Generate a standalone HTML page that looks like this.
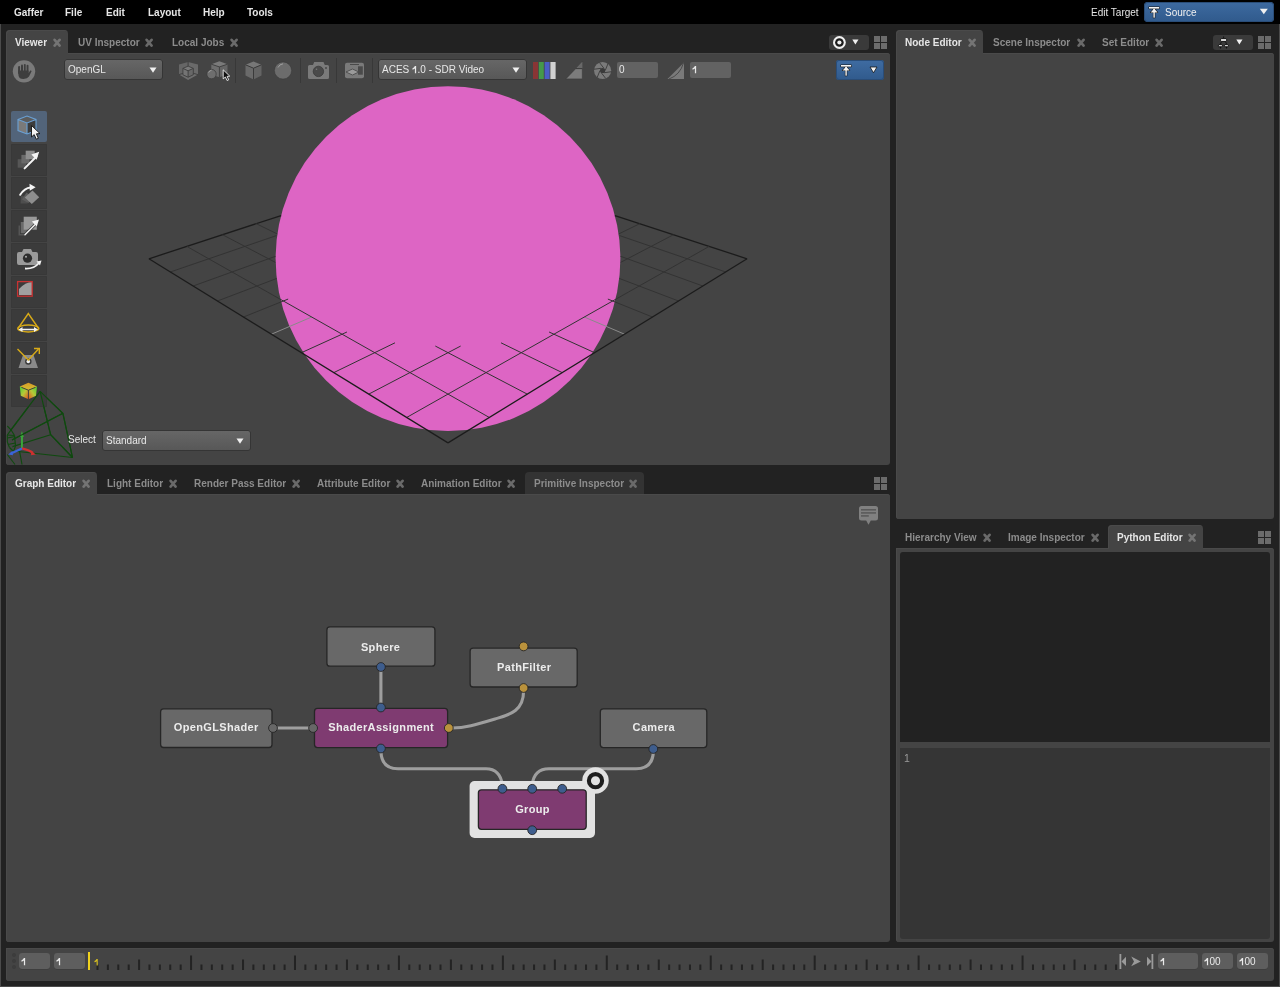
<!DOCTYPE html>
<html><head><meta charset="utf-8"><style>
html,body{margin:0;padding:0;width:1280px;height:987px;overflow:hidden;background:#222;}
body{position:relative;font-family:"Liberation Sans", sans-serif;}
.t{position:absolute;white-space:nowrap;will-change:transform;}
.r{position:absolute;display:block;}
</style></head><body>
<div class="r" style="left:0px;top:0px;width:1280px;height:987px;background:#222222;"></div>
<div class="r" style="left:0px;top:24px;width:1px;height:963px;background:#4b4b4b;"></div>
<div class="r" style="left:1279px;top:24px;width:1px;height:963px;background:#4b4b4b;"></div>
<div class="r" style="left:0px;top:986px;width:1280px;height:1px;background:#4b4b4b;"></div>
<div class="r" style="left:0px;top:0px;width:1280px;height:24px;background:#000000;"></div>
<div class="t" style="left:13.90px;top:7.54px;font-size:10px;line-height:10px;font-weight:bold;color:#e6e6e6;font-family:"Liberation Sans", sans-serif;">Gaffer</div>
<div class="t" style="left:65.40px;top:7.54px;font-size:10px;line-height:10px;font-weight:bold;color:#e6e6e6;font-family:"Liberation Sans", sans-serif;">File</div>
<div class="t" style="left:106.40px;top:7.54px;font-size:10px;line-height:10px;font-weight:bold;color:#e6e6e6;font-family:"Liberation Sans", sans-serif;">Edit</div>
<div class="t" style="left:148.40px;top:7.54px;font-size:10px;line-height:10px;font-weight:bold;color:#e6e6e6;font-family:"Liberation Sans", sans-serif;">Layout</div>
<div class="t" style="left:203.40px;top:7.54px;font-size:10px;line-height:10px;font-weight:bold;color:#e6e6e6;font-family:"Liberation Sans", sans-serif;">Help</div>
<div class="t" style="left:247.40px;top:7.54px;font-size:10px;line-height:10px;font-weight:bold;color:#e6e6e6;font-family:"Liberation Sans", sans-serif;">Tools</div>
<div class="t" style="left:1091.00px;top:7.54px;font-size:10px;line-height:10px;font-weight:normal;color:#e6e6e6;font-family:"Liberation Sans", sans-serif;">Edit Target</div>
<div class="r" style="left:1144px;top:2px;width:130px;height:20px;border-radius:4px;background:linear-gradient(#3d6aa0,#305a8c);box-shadow:inset 0 0 0 1px #2a4d78;"></div>
<svg class="r" style="left:1148.4px;top:5.6px;" width="13" height="13" viewBox="0 0 13 13"><g stroke="#151515" stroke-width="1.1" stroke-linejoin="round"><rect x="1" y="1" width="10.2" height="1.6"/><rect x="5.4" y="3" width="1.4" height="8.7"/><path d="M2.6 6.4 L6.1 2.6 L9.6 6.4 Z"/></g><g fill="#f4f4f4"><rect x="1" y="1" width="10.2" height="1.6"/><rect x="5.4" y="3" width="1.4" height="8.7"/><path d="M2.6 6.4 L6.1 2.6 L9.6 6.4 Z"/></g></svg>
<div class="t" style="left:1165.00px;top:7.54px;font-size:10px;line-height:10px;font-weight:normal;color:#f0f0f0;font-family:"Liberation Sans", sans-serif;">Source</div>
<svg class="r" style="left:1259px;top:8px;" width="10" height="7" viewBox="0 0 10 7"><path d="M0.8 0.8 H8.8 L4.8 6.2 Z" fill="#f0f0f0"/></svg>
<div class="r" style="left:6px;top:53px;width:884px;height:412px;background:#444444;border-radius:0px 3px 3px 3px;box-shadow:inset 0 1px 0 #4a4a4a, inset 1px 0 0 #4a4a4a;"></div>
<div class="r" style="left:896px;top:53px;width:378px;height:466px;background:#444444;border-radius:0px 3px 3px 3px;box-shadow:inset 0 1px 0 #4a4a4a, inset 1px 0 0 #4a4a4a;"></div>
<div class="r" style="left:6px;top:494px;width:884px;height:448px;background:#444444;border-radius:0px 3px 3px 3px;box-shadow:inset 0 1px 0 #4a4a4a, inset 1px 0 0 #4a4a4a;"></div>
<div class="r" style="left:896px;top:548px;width:378px;height:394px;background:#444444;border-radius:0px 3px 3px 3px;box-shadow:inset 0 1px 0 #4a4a4a, inset 1px 0 0 #4a4a4a;"></div>
<div class="r" style="left:6px;top:948px;width:1268px;height:33px;background:#444444;border-radius:0px 3px 3px 3px;box-shadow:inset 0 1px 0 #4a4a4a, inset 1px 0 0 #4a4a4a;"></div>
<div class="r" style="left:6px;top:30px;width:62px;height:24px;background:#444444;border-radius:4px 4px 0 0;box-shadow:inset 1px 1px 0 #4a4a4a;"></div>
<div class="t" style="left:15.00px;top:37.83px;font-size:10px;line-height:10px;font-weight:bold;color:#e6e6e6;font-family:"Liberation Sans", sans-serif;">Viewer</div>
<svg class="r" style="left:53px;top:37.7px;" width="9" height="10" viewBox="0 0 9 10"><path d="M1.6 1.8 L6.6 7.6 M6.6 1.8 L1.6 7.6" stroke="#747474" stroke-width="2.6" stroke-linecap="round"/></svg>
<div class="t" style="left:78.00px;top:37.83px;font-size:10px;line-height:10px;font-weight:bold;color:#8c8c8c;font-family:"Liberation Sans", sans-serif;">UV Inspector</div>
<svg class="r" style="left:144.5px;top:37.7px;" width="9" height="10" viewBox="0 0 9 10"><path d="M1.6 1.8 L6.6 7.6 M6.6 1.8 L1.6 7.6" stroke="#6a6a6a" stroke-width="2.6" stroke-linecap="round"/></svg>
<div class="t" style="left:171.50px;top:37.83px;font-size:10px;line-height:10px;font-weight:bold;color:#8c8c8c;font-family:"Liberation Sans", sans-serif;">Local Jobs</div>
<svg class="r" style="left:229.5px;top:37.7px;" width="9" height="10" viewBox="0 0 9 10"><path d="M1.6 1.8 L6.6 7.6 M6.6 1.8 L1.6 7.6" stroke="#6a6a6a" stroke-width="2.6" stroke-linecap="round"/></svg>
<div class="r" style="left:896px;top:30px;width:87px;height:24px;background:#444444;border-radius:4px 4px 0 0;box-shadow:inset 1px 1px 0 #4a4a4a;"></div>
<div class="t" style="left:905.00px;top:37.83px;font-size:10px;line-height:10px;font-weight:bold;color:#e6e6e6;font-family:"Liberation Sans", sans-serif;">Node Editor</div>
<svg class="r" style="left:967.5px;top:37.7px;" width="9" height="10" viewBox="0 0 9 10"><path d="M1.6 1.8 L6.6 7.6 M6.6 1.8 L1.6 7.6" stroke="#747474" stroke-width="2.6" stroke-linecap="round"/></svg>
<div class="t" style="left:993.30px;top:37.83px;font-size:10px;line-height:10px;font-weight:bold;color:#8c8c8c;font-family:"Liberation Sans", sans-serif;">Scene Inspector</div>
<svg class="r" style="left:1077px;top:37.7px;" width="9" height="10" viewBox="0 0 9 10"><path d="M1.6 1.8 L6.6 7.6 M6.6 1.8 L1.6 7.6" stroke="#6a6a6a" stroke-width="2.6" stroke-linecap="round"/></svg>
<div class="t" style="left:1101.80px;top:37.83px;font-size:10px;line-height:10px;font-weight:bold;color:#8c8c8c;font-family:"Liberation Sans", sans-serif;">Set Editor</div>
<svg class="r" style="left:1155px;top:37.7px;" width="9" height="10" viewBox="0 0 9 10"><path d="M1.6 1.8 L6.6 7.6 M6.6 1.8 L1.6 7.6" stroke="#6a6a6a" stroke-width="2.6" stroke-linecap="round"/></svg>
<div class="r" style="left:6px;top:471.5px;width:91px;height:23.5px;background:#444444;border-radius:4px 4px 0 0;box-shadow:inset 1px 1px 0 #4a4a4a;"></div>
<div class="r" style="left:524.5px;top:471.5px;width:119.5px;height:22.5px;background:#333333;border-radius:4px 4px 0 0;"></div>
<div class="t" style="left:15.00px;top:478.84px;font-size:10px;line-height:10px;font-weight:bold;color:#e6e6e6;font-family:"Liberation Sans", sans-serif;">Graph Editor</div>
<svg class="r" style="left:82px;top:478.7px;" width="9" height="10" viewBox="0 0 9 10"><path d="M1.6 1.8 L6.6 7.6 M6.6 1.8 L1.6 7.6" stroke="#747474" stroke-width="2.6" stroke-linecap="round"/></svg>
<div class="t" style="left:107.00px;top:478.84px;font-size:10px;line-height:10px;font-weight:bold;color:#8c8c8c;font-family:"Liberation Sans", sans-serif;">Light Editor</div>
<svg class="r" style="left:168.75px;top:478.7px;" width="9" height="10" viewBox="0 0 9 10"><path d="M1.6 1.8 L6.6 7.6 M6.6 1.8 L1.6 7.6" stroke="#6a6a6a" stroke-width="2.6" stroke-linecap="round"/></svg>
<div class="t" style="left:193.75px;top:478.84px;font-size:10px;line-height:10px;font-weight:bold;color:#8c8c8c;font-family:"Liberation Sans", sans-serif;">Render Pass Editor</div>
<svg class="r" style="left:291.75px;top:478.7px;" width="9" height="10" viewBox="0 0 9 10"><path d="M1.6 1.8 L6.6 7.6 M6.6 1.8 L1.6 7.6" stroke="#6a6a6a" stroke-width="2.6" stroke-linecap="round"/></svg>
<div class="t" style="left:317.00px;top:478.84px;font-size:10px;line-height:10px;font-weight:bold;color:#8c8c8c;font-family:"Liberation Sans", sans-serif;">Attribute Editor</div>
<svg class="r" style="left:395.5px;top:478.7px;" width="9" height="10" viewBox="0 0 9 10"><path d="M1.6 1.8 L6.6 7.6 M6.6 1.8 L1.6 7.6" stroke="#6a6a6a" stroke-width="2.6" stroke-linecap="round"/></svg>
<div class="t" style="left:421.00px;top:478.84px;font-size:10px;line-height:10px;font-weight:bold;color:#8c8c8c;font-family:"Liberation Sans", sans-serif;">Animation Editor</div>
<svg class="r" style="left:507px;top:478.7px;" width="9" height="10" viewBox="0 0 9 10"><path d="M1.6 1.8 L6.6 7.6 M6.6 1.8 L1.6 7.6" stroke="#6a6a6a" stroke-width="2.6" stroke-linecap="round"/></svg>
<div class="t" style="left:533.50px;top:478.84px;font-size:10px;line-height:10px;font-weight:bold;color:#8c8c8c;font-family:"Liberation Sans", sans-serif;">Primitive Inspector</div>
<svg class="r" style="left:629px;top:478.7px;" width="9" height="10" viewBox="0 0 9 10"><path d="M1.6 1.8 L6.6 7.6 M6.6 1.8 L1.6 7.6" stroke="#6a6a6a" stroke-width="2.6" stroke-linecap="round"/></svg>
<div class="r" style="left:1107.5px;top:525px;width:95.5px;height:24px;background:#444444;border-radius:4px 4px 0 0;box-shadow:inset 1px 1px 0 #4a4a4a;"></div>
<div class="t" style="left:905.40px;top:532.83px;font-size:10px;line-height:10px;font-weight:bold;color:#8c8c8c;font-family:"Liberation Sans", sans-serif;">Hierarchy View</div>
<svg class="r" style="left:983px;top:532.7px;" width="9" height="10" viewBox="0 0 9 10"><path d="M1.6 1.8 L6.6 7.6 M6.6 1.8 L1.6 7.6" stroke="#6a6a6a" stroke-width="2.6" stroke-linecap="round"/></svg>
<div class="t" style="left:1008.00px;top:532.83px;font-size:10px;line-height:10px;font-weight:bold;color:#8c8c8c;font-family:"Liberation Sans", sans-serif;">Image Inspector</div>
<svg class="r" style="left:1090.5px;top:532.7px;" width="9" height="10" viewBox="0 0 9 10"><path d="M1.6 1.8 L6.6 7.6 M6.6 1.8 L1.6 7.6" stroke="#6a6a6a" stroke-width="2.6" stroke-linecap="round"/></svg>
<div class="t" style="left:1116.60px;top:532.83px;font-size:10px;line-height:10px;font-weight:bold;color:#e6e6e6;font-family:"Liberation Sans", sans-serif;">Python Editor</div>
<svg class="r" style="left:1188px;top:532.7px;" width="9" height="10" viewBox="0 0 9 10"><path d="M1.6 1.8 L6.6 7.6 M6.6 1.8 L1.6 7.6" stroke="#747474" stroke-width="2.6" stroke-linecap="round"/></svg>
<svg class="r" style="left:874px;top:36px;" width="13" height="13" viewBox="0 0 13 13"><rect x="0" y="0" width="6" height="6" fill="#6b6b6b"/><rect x="7" y="0" width="6" height="6" fill="#6b6b6b"/><rect x="0" y="7" width="6" height="6" fill="#6b6b6b"/><rect x="7" y="7" width="6" height="6" fill="#6b6b6b"/></svg>
<svg class="r" style="left:1258px;top:36px;" width="13" height="13" viewBox="0 0 13 13"><rect x="0" y="0" width="6" height="6" fill="#6b6b6b"/><rect x="7" y="0" width="6" height="6" fill="#6b6b6b"/><rect x="0" y="7" width="6" height="6" fill="#6b6b6b"/><rect x="7" y="7" width="6" height="6" fill="#6b6b6b"/></svg>
<svg class="r" style="left:874px;top:477px;" width="13" height="13" viewBox="0 0 13 13"><rect x="0" y="0" width="6" height="6" fill="#6b6b6b"/><rect x="7" y="0" width="6" height="6" fill="#6b6b6b"/><rect x="0" y="7" width="6" height="6" fill="#6b6b6b"/><rect x="7" y="7" width="6" height="6" fill="#6b6b6b"/></svg>
<svg class="r" style="left:1258px;top:531px;" width="13" height="13" viewBox="0 0 13 13"><rect x="0" y="0" width="6" height="6" fill="#6b6b6b"/><rect x="7" y="0" width="6" height="6" fill="#6b6b6b"/><rect x="0" y="7" width="6" height="6" fill="#6b6b6b"/><rect x="7" y="7" width="6" height="6" fill="#6b6b6b"/></svg>
<svg class="r" style="left:6px;top:53px;border-radius:0 0 3px 3px;" width="884" height="412" viewBox="0 0 884 412"><circle cx="442" cy="205.60000000000002" r="172.4" fill="#dd65c4"/><line x1="275.10" y1="162.57" x2="142.92" y2="205.80" stroke="#1c1c1c" stroke-width="1.3"/><line x1="608.90" y1="162.57" x2="741.08" y2="205.80" stroke="#1c1c1c" stroke-width="1.3"/><line x1="270.41" y1="182.58" x2="164.33" y2="218.98" stroke="#333333" stroke-width="1.0"/><line x1="613.59" y1="182.58" x2="719.67" y2="218.98" stroke="#333333" stroke-width="1.0"/><line x1="269.59" y1="203.26" x2="187.14" y2="233.01" stroke="#333333" stroke-width="1.0"/><line x1="614.41" y1="203.26" x2="696.86" y2="233.01" stroke="#333333" stroke-width="1.0"/><line x1="270.51" y1="225.53" x2="211.49" y2="247.99" stroke="#333333" stroke-width="1.0"/><line x1="613.49" y1="225.53" x2="672.51" y2="247.99" stroke="#333333" stroke-width="1.0"/><line x1="282.14" y1="246.07" x2="237.53" y2="264.02" stroke="#333333" stroke-width="1.0"/><line x1="601.86" y1="246.07" x2="646.47" y2="264.02" stroke="#333333" stroke-width="1.0"/><line x1="305.69" y1="264.02" x2="265.45" y2="281.20" stroke="#8a8a8a" stroke-width="1.0"/><line x1="578.31" y1="264.02" x2="618.55" y2="281.20" stroke="#8a8a8a" stroke-width="1.0"/><line x1="340.94" y1="278.99" x2="295.47" y2="299.67" stroke="#333333" stroke-width="1.0"/><line x1="543.06" y1="278.99" x2="588.53" y2="299.67" stroke="#333333" stroke-width="1.0"/><line x1="633.76" y1="170.70" x2="612.85" y2="180.88" stroke="#333333" stroke-width="1.0"/><line x1="389.01" y1="289.81" x2="327.83" y2="319.58" stroke="#333333" stroke-width="1.0"/><line x1="250.24" y1="170.70" x2="271.15" y2="180.88" stroke="#333333" stroke-width="1.0"/><line x1="494.99" y1="289.81" x2="556.17" y2="319.58" stroke="#333333" stroke-width="1.0"/><line x1="667.47" y1="181.73" x2="614.68" y2="209.34" stroke="#333333" stroke-width="1.0"/><line x1="454.66" y1="293.05" x2="362.80" y2="341.10" stroke="#333333" stroke-width="1.0"/><line x1="216.53" y1="181.73" x2="269.32" y2="209.34" stroke="#333333" stroke-width="1.0"/><line x1="429.34" y1="293.05" x2="521.20" y2="341.10" stroke="#333333" stroke-width="1.0"/><line x1="703.18" y1="193.41" x2="400.73" y2="364.44" stroke="#333333" stroke-width="1.0"/><line x1="180.82" y1="193.41" x2="483.27" y2="364.44" stroke="#333333" stroke-width="1.0"/><line x1="741.08" y1="205.80" x2="442.00" y2="389.84" stroke="#1c1c1c" stroke-width="1.3"/><line x1="142.92" y1="205.80" x2="442.00" y2="389.84" stroke="#1c1c1c" stroke-width="1.3"/><line x1="34.1" y1="338.4" x2="56.9" y2="360.3" stroke="#0f4a0f" stroke-width="1.15"/><line x1="56.9" y1="360.3" x2="66.5" y2="404.5" stroke="#0f4a0f" stroke-width="1.15"/><line x1="34.1" y1="338.4" x2="44.6" y2="381.7" stroke="#0f4a0f" stroke-width="1.15"/><line x1="44.6" y1="381.7" x2="66.5" y2="404.5" stroke="#0f4a0f" stroke-width="1.15"/><line x1="5" y1="376.8" x2="34.1" y2="338.4" stroke="#0f4a0f" stroke-width="1.15"/><line x1="6" y1="387.1" x2="56.9" y2="360.3" stroke="#0f4a0f" stroke-width="1.15"/><line x1="6.5" y1="393.6" x2="44.6" y2="381.7" stroke="#0f4a0f" stroke-width="1.15"/><line x1="10" y1="398.3" x2="66.5" y2="404.5" stroke="#0f4a0f" stroke-width="1.15"/><line x1="1.2999999999999998" y1="373" x2="5" y2="376.8" stroke="#0f4a0f" stroke-width="1.15"/><line x1="5" y1="376.8" x2="1.2999999999999998" y2="382" stroke="#0f4a0f" stroke-width="1.15"/><line x1="1.2999999999999998" y1="382" x2="1.2999999999999998" y2="389" stroke="#0f4a0f" stroke-width="1.15"/><line x1="1.2999999999999998" y1="389" x2="3.5" y2="394.5" stroke="#0f4a0f" stroke-width="1.15"/><line x1="3.5" y1="394.5" x2="7.5" y2="398.5" stroke="#0f4a0f" stroke-width="1.15"/><line x1="5" y1="376.8" x2="8.5" y2="382.5" stroke="#0f4a0f" stroke-width="1.15"/><line x1="8.5" y1="382.5" x2="9.5" y2="393" stroke="#0f4a0f" stroke-width="1.15"/><line x1="9.5" y1="393" x2="7.5" y2="398.5" stroke="#0f4a0f" stroke-width="1.15"/><line x1="1.2999999999999998" y1="385" x2="9" y2="383.5" stroke="#0f4a0f" stroke-width="1.15"/><line x1="2" y1="391.5" x2="9.3" y2="390" stroke="#0f4a0f" stroke-width="1.15"/><line x1="1.2999999999999998" y1="382" x2="8.5" y2="382.5" stroke="#0f4a0f" stroke-width="1.15"/><line x1="1.2999999999999998" y1="401.5" x2="9" y2="411.5" stroke="#0f4a0f" stroke-width="1.15"/><line x1="13.5" y1="398" x2="16" y2="411.5" stroke="#0f4a0f" stroke-width="1.15"/><line x1="15.95" y1="395.4" x2="15.95" y2="382.4" stroke="#3aa53a" stroke-width="2"/><path d="M14.049999999999999 383.9 L15.95 378.0 L17.849999999999998 383.9 Z" fill="#3aa53a"/><path d="M15.95 395.4 Q22.95 396.9 26.95 399.9" fill="none" stroke="#d03030" stroke-width="2.2"/><path d="M24.95 397.59999999999997 L29.75 401.4 L25.15 402.2 Z" fill="#d03030"/><path d="M15.95 395.4 L4.949999999999999 400.4" fill="none" stroke="#3a64d8" stroke-width="2.2"/><path d="M6.449999999999999 398.0 L2.1499999999999986 401.4 L6.949999999999999 402.2 Z" fill="#3a64d8"/></svg>
<svg class="r" style="left:12px;top:59px;" width="24" height="25" viewBox="0 0 24 25"><circle cx="12" cy="12.35" r="11.2" fill="#7a7a7a"/><g fill="#3e3e3e"><rect x="6.1" y="7" width="2" height="8" rx="1"/><rect x="9" y="5.6" width="2" height="8" rx="1"/><rect x="11.9" y="4.9" width="1.8" height="8" rx="0.9"/><rect x="14.6" y="5.7" width="1.9" height="8" rx="0.95"/><path d="M6.1 11.5 H16.5 V14 L18.3 11.6 Q19.3 11 19.6 12.2 L17 17.6 Q15.5 20 11.5 20 Q7 20 6.5 16.5 Z"/></g></svg>
<div class="r" style="left:64.3px;top:59.4px;width:98.4px;height:20.2px;border-radius:3px;background:linear-gradient(#676767,#575757);box-shadow:inset 0 0 0 1px #353535;"></div>
<div class="t" style="left:68.00px;top:65.13px;font-size:10px;line-height:10px;font-weight:normal;color:#e8e8e8;font-family:"Liberation Sans", sans-serif;">OpenGL</div>
<svg class="r" style="left:148.5px;top:67px;" width="8" height="6" viewBox="0 0 8 6"><path d="M0.5 0.5 H7.5 L4 5.8 Z" fill="#f0f0f0"/></svg>
<svg class="r" style="left:178px;top:61px;" width="21" height="21" viewBox="0 0 21 21"><path d="M1 3.6 L10.1 0.9 V11 L1 13.6 Z" fill="#666"/><path d="M10.1 0.9 L20 3.6 V13.6 L10.1 11 Z" fill="#6a6a6a"/><path d="M1 13.6 L10.1 11 L20 13.6 L10.1 18.9 Z" fill="#6e6e6e"/><path d="M10.1 0.9 V11 M1 13.6 L10.1 11 L20 13.6" fill="none" stroke="#3e3e3e" stroke-width="0.9"/><path d="M4.9 7.4 L10.1 5.1 L15.3 7.4 L10.1 9.8 Z" fill="#7a7a7a"/><path d="M4.9 7.4 L10.1 9.8 V16.2 L4.9 13.8 Z" fill="#747474"/><path d="M15.3 7.4 L10.1 9.8 V16.2 L15.3 13.8 Z" fill="#686868"/><path d="M4.9 7.4 L10.1 5.1 L15.3 7.4 V13.8 L10.1 16.2 L4.9 13.8 Z M4.9 7.4 L10.1 9.8 L15.3 7.4 M10.1 9.8 V16.2" fill="none" stroke="#3e3e3e" stroke-width="0.9" stroke-linejoin="round"/></svg>
<svg class="r" style="left:205px;top:60px;" width="26" height="22" viewBox="0 0 26 22"><path d="M6.3 4.2 L14.4 1.3 L22.5 4.2 L14.4 6.9 Z" fill="#7a7a7a"/><path d="M6.3 4.2 L14.4 6.9 V17.2 L6.3 14.5 Z" fill="#6e6e6e"/><path d="M22.5 4.2 L14.4 6.9 V17.2 L22.5 14.5 Z" fill="#666"/><path d="M6.3 4.2 L14.4 6.9 L22.5 4.2 M14.4 6.9 V17.2" fill="none" stroke="#3e3e3e" stroke-width="0.9"/><circle cx="6.5" cy="14.1" r="4.7" fill="#6e6e6e" stroke="#3e3e3e" stroke-width="0.8"/><path d="M3.6 12.6 Q4.5 10.6 6.6 10.2" fill="none" stroke="#a8a8a8" stroke-width="0.8"/></svg>
<svg class="r" style="left:221.5px;top:68.5px;" width="9" height="13" viewBox="0 0 9 13"><path d="M1.2 0.8 L1.2 9.9 L3.4 8 L5 11.5 L6.7 10.8 L5.1 7.4 L7.8 7.2 Z" fill="#111" stroke="#eee" stroke-width="0.9" stroke-linejoin="round"/></svg>
<div class="r" style="left:235px;top:58px;width:1px;height:25px;background:#383838;"></div>
<svg class="r" style="left:244px;top:60px;" width="19" height="21" viewBox="0 0 19 21"><path d="M9.5 1.5 L17.5 4.8 L9.5 8.2 L1.5 4.8 Z" fill="#777"/><path d="M1.5 4.8 L9.5 8.2 V19.5 L1.5 15.5 Z" fill="#6a6a6a"/><path d="M17.5 4.8 L9.5 8.2 V19.5 L17.5 15.5 Z" fill="#646464"/><path d="M1.5 4.8 L9.5 8.2 L17.5 4.8 M9.5 8.2 V19.5" fill="none" stroke="#3a3a3a" stroke-width="1"/></svg>
<svg class="r" style="left:273px;top:60px;" width="20" height="21" viewBox="0 0 20 21"><circle cx="10" cy="10.5" r="8.6" fill="#6c6c6c" stroke="#3c3c3c" stroke-width="0.6"/><path d="M5 7.5 Q6.5 4.2 10 3.8" fill="none" stroke="#a0a0a0" stroke-width="1"/></svg>
<div class="r" style="left:300px;top:58px;width:1px;height:25px;background:#383838;"></div>
<svg class="r" style="left:307px;top:61px;" width="23" height="19" viewBox="0 0 23 19"><path d="M2.5 4 H6 L7.2 1 H16.5 L17.8 4 H20.5 Q22 4 22 5.5 V16.5 Q22 18 20.5 18 H2.5 Q1 18 1 16.5 V5.5 Q1 4 2.5 4 Z" fill="#7a7a7a"/><circle cx="11.4" cy="10.4" r="5.2" fill="#4a4a4a" stroke="#3a3a3a" stroke-width="0.8"/><circle cx="19" cy="7" r="1" fill="#4a4a4a"/><circle cx="9.5" cy="8.2" r="0.8" fill="#7a7a7a"/></svg>
<div class="r" style="left:336px;top:58px;width:1px;height:25px;background:#383838;"></div>
<svg class="r" style="left:344px;top:61px;" width="22" height="19" viewBox="0 0 22 19"><rect x="1" y="1.8" width="19" height="15.4" rx="2" fill="#7a7a7a"/><rect x="6" y="3" width="9" height="1" fill="#4a4a4a"/><path d="M2 11 L8.5 8 L14.8 11 L8.5 14 Z" fill="#9a9a9a" stroke="#454545" stroke-width="0.8"/><rect x="14" y="5.3" width="4.8" height="8.4" fill="#4a4a4a"/></svg>
<div class="r" style="left:372px;top:58px;width:1px;height:25px;background:#383838;"></div>
<div class="r" style="left:378.3px;top:59.4px;width:148.4px;height:20.2px;border-radius:3px;background:linear-gradient(#676767,#575757);box-shadow:inset 0 0 0 1px #353535;"></div>
<div class="t" style="left:382.00px;top:65.13px;font-size:10px;line-height:10px;font-weight:normal;color:#e8e8e8;font-family:"Liberation Sans", sans-serif;">ACES <svg width="5.56" height="7.16" viewBox="0 0 5.56 7.16" style="vertical-align:0;display:inline-block;overflow:visible"><path d="M2.90 0 H4.15 V7.16 H2.90 V2.60 Q1.70 3.50 0.50 3.70 V2.30 Q2.00 1.70 2.90 0 Z" fill="#e8e8e8"/></svg>.0 - SDR Video</div>
<svg class="r" style="left:511.5px;top:67px;" width="8" height="6" viewBox="0 0 8 6"><path d="M0.5 0.5 H7.5 L4 5.8 Z" fill="#f0f0f0"/></svg>
<svg class="r" style="left:532px;top:61px;" width="25" height="19" viewBox="0 0 25 19"><rect x="1" y="1" width="5" height="17" fill="#8a3535"/><rect x="6.8" y="1" width="5" height="17" fill="#45994a"/><rect x="12.6" y="1" width="5" height="17" fill="#4a5ec4"/><rect x="18.4" y="1" width="5.2" height="17" fill="#d2d2d2"/></svg>
<svg class="r" style="left:565px;top:60px;" width="19" height="20" viewBox="0 0 19 20"><path d="M0.8 18.9 L17.3 1.8 V18.9 Z" fill="#7c7c7c" stroke="#3a3a3a" stroke-width="0.6" stroke-linejoin="round"/><path d="M11.3 8.2 L17.3 1.8 V8.2 Z" fill="#686868"/><path d="M10.8 8.6 H17.3" stroke="#3a3a3a" stroke-width="1"/></svg>
<svg class="r" style="left:593px;top:61px;" width="20" height="20" viewBox="0 0 20 20"><circle cx="9.6" cy="9.5" r="8.6" fill="#7a7a7a"/><circle cx="9.6" cy="9.5" r="2.6" fill="#3a3a3a"/><line x1="12.20" y1="9.50" x2="14.95" y2="2.76" stroke="#3a3a3a" stroke-width="0.9"/><line x1="10.90" y1="11.75" x2="18.11" y2="10.76" stroke="#3a3a3a" stroke-width="0.9"/><line x1="8.30" y1="11.75" x2="12.76" y2="17.50" stroke="#3a3a3a" stroke-width="0.9"/><line x1="7.00" y1="9.50" x2="4.25" y2="16.24" stroke="#3a3a3a" stroke-width="0.9"/><line x1="8.30" y1="7.25" x2="1.09" y2="8.24" stroke="#3a3a3a" stroke-width="0.9"/><line x1="10.90" y1="7.25" x2="6.44" y2="1.50" stroke="#3a3a3a" stroke-width="0.9"/></svg>
<div class="r" style="left:617px;top:62px;width:41px;height:16px;border-radius:3px;background:#626262;border-radius:2px;"></div>
<div class="t" style="left:619.20px;top:64.73px;font-size:10px;line-height:10px;font-weight:normal;color:#e8e8e8;font-family:"Liberation Sans", sans-serif;">0</div>
<svg class="r" style="left:666px;top:61px;" width="20" height="19" viewBox="0 0 20 19"><path d="M1.5 18 L18 1.5 V18 Z" fill="#7a7a7a"/><path d="M3 18 Q14 14 17.5 2" fill="none" stroke="#454545" stroke-width="0.9"/></svg>
<div class="r" style="left:690px;top:62px;width:41px;height:16px;border-radius:3px;background:#626262;border-radius:2px;"></div>
<div class="t" style="left:692.20px;top:64.73px;font-size:10px;line-height:10px;font-weight:normal;color:#e8e8e8;font-family:"Liberation Sans", sans-serif;"><svg width="5.56" height="7.16" viewBox="0 0 5.56 7.16" style="vertical-align:0;display:inline-block;overflow:visible"><path d="M2.90 0 H4.15 V7.16 H2.90 V2.60 Q1.70 3.50 0.50 3.70 V2.30 Q2.00 1.70 2.90 0 Z" fill="#e8e8e8"/></svg></div>
<div class="r" style="left:836px;top:60px;width:47.5px;height:19.5px;border-radius:3px;background:linear-gradient(#3f6ca2,#305a8c);box-shadow:inset 0 0 0 1px #2a4d78;"></div>
<svg class="r" style="left:840.3px;top:63.7px;" width="13" height="13" viewBox="0 0 13 13"><g stroke="#151515" stroke-width="1.1" stroke-linejoin="round"><rect x="1" y="1" width="10.2" height="1.6"/><rect x="5.4" y="3" width="1.4" height="8.7"/><path d="M2.6 6.4 L6.1 2.6 L9.6 6.4 Z"/></g><g fill="#f4f4f4"><rect x="1" y="1" width="10.2" height="1.6"/><rect x="5.4" y="3" width="1.4" height="8.7"/><path d="M2.6 6.4 L6.1 2.6 L9.6 6.4 Z"/></g></svg>
<svg class="r" style="left:868.5px;top:65.8px;" width="9" height="8" viewBox="0 0 9 8"><path d="M1 1 H8 L4.5 6.8 Z" fill="#f4f4f4" stroke="#151515" stroke-width="0.8" stroke-linejoin="round"/></svg>
<div class="r" style="left:829px;top:35px;width:40px;height:15px;border-radius:3px;background:#3a3a3a;"></div>
<svg class="r" style="left:832px;top:35px;" width="15" height="15" viewBox="0 0 15 15"><circle cx="7.4" cy="7.5" r="6.4" fill="#f0f0f0"/><circle cx="7.4" cy="7.5" r="4.3" fill="#1a1a1a"/><circle cx="7.4" cy="7.5" r="2.1" fill="#f0f0f0"/></svg>
<svg class="r" style="left:851.5px;top:38.5px;" width="7" height="6" viewBox="0 0 7 6"><path d="M0.3 0.5 H6.5 L3.4 5.4 Z" fill="#f0f0f0"/></svg>
<div class="r" style="left:1213px;top:35px;width:40px;height:15px;border-radius:3px;background:#3a3a3a;"></div>
<svg class="r" style="left:1216px;top:35px;" width="15" height="15" viewBox="0 0 15 15"><path d="M7.6 1.5 V3.5 M5.5 6.5 L4.5 9 M9.5 6.5 L10.5 9 M4.5 12 V13.5 M10.5 12 V13.5" stroke="#111" stroke-width="1"/><rect x="4.6" y="3.6" width="6" height="2.8" rx="0.6" fill="#f0f0f0" stroke="#111" stroke-width="1"/><rect x="2.4" y="9.6" width="4" height="2.2" rx="0.5" fill="#e0e0e0" stroke="#111" stroke-width="1"/><rect x="8.4" y="9.6" width="4" height="2.2" rx="0.5" fill="#e0e0e0" stroke="#111" stroke-width="1"/></svg>
<svg class="r" style="left:1235.5px;top:38.5px;" width="7" height="6" viewBox="0 0 7 6"><path d="M0.3 0.5 H6.5 L3.4 5.4 Z" fill="#f0f0f0"/></svg>
<div class="r" style="left:11.3px;top:111.3px;width:35.4px;height:31.2px;border-radius:2px;background:#52647a;"></div>
<div class="r" style="left:11.3px;top:144.3px;width:35.4px;height:31.8px;border-radius:1px;background:#3b3b3b;box-shadow:inset 0 0 0 1px #383838;"></div>
<div class="r" style="left:11.3px;top:177.3px;width:35.4px;height:31.8px;border-radius:1px;background:#3b3b3b;box-shadow:inset 0 0 0 1px #383838;"></div>
<div class="r" style="left:11.3px;top:210.3px;width:35.4px;height:31.8px;border-radius:1px;background:#3b3b3b;box-shadow:inset 0 0 0 1px #383838;"></div>
<div class="r" style="left:11.3px;top:243.2px;width:35.4px;height:31.8px;border-radius:1px;background:#3b3b3b;box-shadow:inset 0 0 0 1px #383838;"></div>
<div class="r" style="left:11.3px;top:276.2px;width:35.4px;height:31.8px;border-radius:1px;background:#3b3b3b;box-shadow:inset 0 0 0 1px #383838;"></div>
<div class="r" style="left:11.3px;top:309.2px;width:35.4px;height:31.8px;border-radius:1px;background:#3b3b3b;box-shadow:inset 0 0 0 1px #383838;"></div>
<div class="r" style="left:11.3px;top:342.2px;width:35.4px;height:31.8px;border-radius:1px;background:#3b3b3b;box-shadow:inset 0 0 0 1px #383838;"></div>
<div class="r" style="left:11.3px;top:375.2px;width:35.4px;height:31.8px;border-radius:1px;background:#3b3b3b;box-shadow:inset 0 0 0 1px #383838;"></div>
<svg class="r" style="left:12px;top:112px;" width="35" height="31" viewBox="0 0 35 31"><path d="M6 7.5 L15 4 L24 7.5 L15 11 Z" fill="#5c5c5c"/><path d="M6 7.5 L15 11 V22 L6 18.5 Z" fill="#7a7a7a"/><path d="M24 7.5 L15 11 V22 L24 18.5 Z" fill="#3c3c3c"/><path d="M6 7.5 L15 4 L24 7.5 V18.5 L15 22 L6 18.5 Z M6 7.5 L15 11 L24 7.5 M15 11 V22" fill="none" stroke="#6aa0d4" stroke-width="1.1"/><path d="M19.5 13.5 L19.5 25 L22.2 22.6 L24.3 27.2 L26.4 26.3 L24.4 21.8 L28 21.6 Z" fill="#f4f4f4" stroke="#111" stroke-width="0.9"/></svg>
<svg class="r" style="left:11.3px;top:144.3px;" width="35" height="32" viewBox="0 0 35 32"><rect x="6.7" y="15.2" width="8.3" height="8.5" fill="#565656"/><rect x="10.4" y="10.9" width="8.1" height="8.5" fill="#6a6a6a"/><rect x="14.7" y="6.7" width="9" height="8.5" fill="#8e8e8e"/><path d="M13.6 24.4 L25.5 12.5" stroke="#f4f4f4" stroke-width="2" stroke-linecap="round"/><path d="M20.3 10.5 L28.2 7.8 L25.6 15.8 Z" fill="#f4f4f4"/></svg>
<svg class="r" style="left:11.3px;top:177.3px;" width="35" height="32" viewBox="0 0 35 32"><path d="M9.5 26.5 L10 18.5 L17.5 20 L16.5 26.5 Z" fill="#4e4e4e"/><path d="M11 22.5 L15.5 15.5 L22 20.5 L17.5 26 Z" fill="#5e5e5e"/><path d="M13.8 20.5 L21.5 13.5 L28.2 20.2 L20.8 27 Z" fill="#8e8e8e"/><path d="M9.2 17.8 Q13.5 11 19.6 10.5" fill="none" stroke="#f4f4f4" stroke-width="2" stroke-linecap="round"/><path d="M18.5 6.8 L24.6 10.2 L18.8 13.8 Z" fill="#f4f4f4"/></svg>
<svg class="r" style="left:11.3px;top:210.3px;" width="35" height="32" viewBox="0 0 35 32"><path d="M7.5 25.5 V15.5 H9 V24 H14 V25.5 Z" fill="#555"/><rect x="9.8" y="12" width="6" height="11.2" fill="#6a6a6a"/><rect x="12.7" y="6.7" width="13.1" height="13" fill="#999"/><path d="M14 24.8 L25 13.8" stroke="#3b3b3b" stroke-width="3"/><path d="M14 24.8 L25.2 13.6" stroke="#f4f4f4" stroke-width="1.4" stroke-linecap="round"/><path d="M20.8 11.6 L28 9.4 L25.8 16.6 Z" fill="#f4f4f4"/></svg>
<svg class="r" style="left:12px;top:242px;" width="35" height="32" viewBox="0 0 35 32"><path d="M7 10 H10 L11.5 7 H19 L20.5 10 H24 Q26 10 26 12 V21 Q26 23 24 23 H7 Q5 23 5 21 V12 Q5 10 7 10 Z" fill="#9a9a9a"/><circle cx="15.5" cy="16.2" r="4.6" fill="#2c2c2c"/><circle cx="14" cy="14.8" r="1" fill="#aaa"/><path d="M13 26.5 Q22 27 27 21" fill="none" stroke="#f2f2f2" stroke-width="1.8"/><path d="M24.5 19.5 L29.5 18.5 L28 23.5 Z" fill="#f2f2f2"/></svg>
<svg class="r" style="left:12px;top:276px;" width="35" height="32" viewBox="0 0 35 32"><path d="M7 19 V13 Q13.5 6 20 6 V19 Z" fill="#a0a0a0"/><rect x="5.6" y="5.6" width="14.6" height="14.6" fill="none" stroke="#c83232" stroke-width="1.3"/></svg>
<svg class="r" style="left:12px;top:309.3px;" width="35" height="32" viewBox="0 0 35 32"><path d="M6 19.5 L16.3 4.5 L26.6 19.5" fill="none" stroke="#d8aa18" stroke-width="1.4"/><ellipse cx="16.3" cy="19.5" rx="10.5" ry="3.4" fill="none" stroke="#d8aa18" stroke-width="1.5"/><path d="M9 20.5 H23.5" stroke="#f2f2f2" stroke-width="1.5"/><path d="M10.5 18 L6.5 20.5 L10.5 23 Z M22 18 L26 20.5 L22 23 Z" fill="#f2f2f2"/></svg>
<svg class="r" style="left:12px;top:342.2px;" width="35" height="32" viewBox="0 0 35 32"><path d="M6.5 26 L11 13 H21.5 L26 26 Z" fill="#8a8a8a"/><circle cx="16.3" cy="19.5" r="3.2" fill="#3a3a3a"/><circle cx="16.3" cy="19.5" r="1.8" fill="#f0f0f0"/><path d="M5.5 7 L16.3 18 L26.5 7" fill="none" stroke="#d8aa18" stroke-width="1.4"/><path d="M22 6.5 H27.3 V12" fill="none" stroke="#d8aa18" stroke-width="1.4"/></svg>
<svg class="r" style="left:12px;top:375px;" width="35" height="32" viewBox="0 0 35 32"><defs><linearGradient id="cg" x1="0" y1="0" x2="0" y2="1"><stop offset="0" stop-color="#d89a28"/><stop offset="1" stop-color="#d2c030"/></linearGradient><linearGradient id="cl" x1="0" y1="0" x2="1" y2="1"><stop offset="0" stop-color="#48d038"/><stop offset="0.5" stop-color="#b8c838"/><stop offset="1" stop-color="#e84a20"/></linearGradient><linearGradient id="cr" x1="1" y1="0" x2="0" y2="1"><stop offset="0" stop-color="#48d038"/><stop offset="0.5" stop-color="#b8c838"/><stop offset="1" stop-color="#e84a20"/></linearGradient></defs><path d="M16.4 7.7 L25 11.6 L16.4 15.2 L7.8 11.6 Z" fill="url(#cg)"/><path d="M7.8 11.6 L16.4 15.2 V24.3 L8.8 20.8 Z" fill="url(#cl)"/><path d="M25 11.6 L16.4 15.2 V24.3 L24 20.8 Z" fill="url(#cr)"/><path d="M9.5 12.4 L16.4 15.2 L23.4 12.4 M16.4 15.2 V24.3" fill="none" stroke="#3a3a3a" stroke-width="0.9"/></svg>
<svg class="r" style="left:6px;top:53px;" width="884" height="412" viewBox="0 0 884 412"><line x1="34.1" y1="338.4" x2="56.9" y2="360.3" stroke="#0f4a0f" stroke-width="1.15"/><line x1="56.9" y1="360.3" x2="66.5" y2="404.5" stroke="#0f4a0f" stroke-width="1.15"/><line x1="34.1" y1="338.4" x2="44.6" y2="381.7" stroke="#0f4a0f" stroke-width="1.15"/><line x1="44.6" y1="381.7" x2="66.5" y2="404.5" stroke="#0f4a0f" stroke-width="1.15"/><line x1="5" y1="376.8" x2="34.1" y2="338.4" stroke="#0f4a0f" stroke-width="1.15"/><line x1="6" y1="387.1" x2="56.9" y2="360.3" stroke="#0f4a0f" stroke-width="1.15"/></svg>
<div class="t" style="left:68.00px;top:434.54px;font-size:10px;line-height:10px;font-weight:normal;color:#e8e8e8;font-family:"Liberation Sans", sans-serif;">Select</div>
<div class="r" style="left:102.3px;top:430.4px;width:148.4px;height:20.2px;border-radius:3px;background:linear-gradient(#676767,#575757);box-shadow:inset 0 0 0 1px #353535;"></div>
<div class="t" style="left:106.00px;top:436.04px;font-size:10px;line-height:10px;font-weight:normal;color:#e8e8e8;font-family:"Liberation Sans", sans-serif;">Standard</div>
<svg class="r" style="left:235.5px;top:438px;" width="8" height="6" viewBox="0 0 8 6"><path d="M0.5 0.5 H7.5 L4 5.8 Z" fill="#f0f0f0"/></svg>
<svg class="r" style="left:6px;top:494px;" width="884" height="448" viewBox="0 0 884 448"><path d="M374.9 176 V210" fill="none" stroke="#9e9e9e" stroke-width="3.1" stroke-linecap="round"/><path d="M270 234 H304" fill="none" stroke="#9e9e9e" stroke-width="3.1" stroke-linecap="round"/><path d="M517.6 197 C517.6 218 502 221 489 225 C469 231 459 234 446 234" fill="none" stroke="#9e9e9e" stroke-width="3.1" stroke-linecap="round"/><path d="M374.9 258 Q376 274.79999999999995 392 274.79999999999995 H480 Q494 274.79999999999995 496.4 291" fill="none" stroke="#9e9e9e" stroke-width="3.1" stroke-linecap="round"/><path d="M647.3 259 Q646 274.79999999999995 630 274.79999999999995 H543 Q528 274.79999999999995 526.2 291" fill="none" stroke="#9e9e9e" stroke-width="3.1" stroke-linecap="round"/><rect x="320.90" y="132.90" width="108.00" height="39.30" rx="3" ry="3" fill="#686868" stroke="#262626" stroke-width="1.3"/><rect x="464.10" y="154.10" width="107.10" height="38.90" rx="3" ry="3" fill="#686868" stroke="#262626" stroke-width="1.3"/><rect x="154.60" y="214.80" width="111.40" height="38.70" rx="3" ry="3" fill="#686868" stroke="#262626" stroke-width="1.3"/><rect x="308.50" y="214.40" width="133.10" height="39.20" rx="3" ry="3" fill="#7f3b71" stroke="#262626" stroke-width="1.3"/><rect x="594.30" y="214.90" width="106.50" height="38.70" rx="3" ry="3" fill="#686868" stroke="#262626" stroke-width="1.3"/><rect x="463.6" y="287" width="125.4" height="57" rx="5" ry="5" fill="#e2e2e2"/><rect x="472.40" y="295.80" width="107.80" height="39.50" rx="3" ry="3" fill="#7f3b71" stroke="#262626" stroke-width="1.3"/><circle cx="589.5" cy="286.5" r="13.2" fill="#e2e2e2"/><circle cx="589.5" cy="286.70000000000005" r="6.6" fill="none" stroke="#1e1e1e" stroke-width="4.1"/><circle cx="374.90" cy="173.00" r="4.4" fill="#3e5d8d" stroke="#262626" stroke-width="0.9"/><circle cx="374.90" cy="213.50" r="4.4" fill="#3e5d8d" stroke="#262626" stroke-width="0.9"/><circle cx="374.90" cy="254.50" r="4.4" fill="#3e5d8d" stroke="#262626" stroke-width="0.9"/><circle cx="307.10" cy="234.00" r="4.4" fill="#676767" stroke="#262626" stroke-width="0.9"/><circle cx="267.00" cy="234.00" r="4.4" fill="#676767" stroke="#262626" stroke-width="0.9"/><circle cx="442.80" cy="234.00" r="4.4" fill="#ba923c" stroke="#262626" stroke-width="0.9"/><circle cx="517.60" cy="152.40" r="4.4" fill="#ba923c" stroke="#262626" stroke-width="0.9"/><circle cx="517.60" cy="194.00" r="4.4" fill="#ba923c" stroke="#262626" stroke-width="0.9"/><circle cx="647.30" cy="255.00" r="4.4" fill="#3e5d8d" stroke="#262626" stroke-width="0.9"/><circle cx="496.40" cy="294.80" r="4.4" fill="#3e5d8d" stroke="#262626" stroke-width="0.9"/><circle cx="526.20" cy="294.80" r="4.4" fill="#3e5d8d" stroke="#262626" stroke-width="0.9"/><circle cx="556.20" cy="294.80" r="4.4" fill="#3e5d8d" stroke="#262626" stroke-width="0.9"/><circle cx="526.20" cy="336.20" r="4.4" fill="#3e5d8d" stroke="#262626" stroke-width="0.9"/></svg>
<div class="t" style="left:326.3px;top:641.59px;width:109.19999999999999px;text-align:center;font-size:11px;line-height:11px;font-weight:bold;color:#ececec;letter-spacing:0.35px;">Sphere</div>
<div class="t" style="left:469.5px;top:661.89px;width:108.29999999999995px;text-align:center;font-size:11px;line-height:11px;font-weight:bold;color:#ececec;letter-spacing:0.35px;">PathFilter</div>
<div class="t" style="left:160px;top:722.49px;width:112.60000000000002px;text-align:center;font-size:11px;line-height:11px;font-weight:bold;color:#ececec;letter-spacing:0.35px;">OpenGLShader</div>
<div class="t" style="left:313.9px;top:722.49px;width:134.3px;text-align:center;font-size:11px;line-height:11px;font-weight:bold;color:#ececec;letter-spacing:0.35px;">ShaderAssignment</div>
<div class="t" style="left:599.7px;top:722.49px;width:107.69999999999993px;text-align:center;font-size:11px;line-height:11px;font-weight:bold;color:#ececec;letter-spacing:0.35px;">Camera</div>
<div class="t" style="left:477.8px;top:803.69px;width:108.99999999999994px;text-align:center;font-size:11px;line-height:11px;font-weight:bold;color:#ececec;letter-spacing:0.35px;">Group</div>
<svg class="r" style="left:858px;top:505px;" width="22" height="22" viewBox="0 0 22 22"><path d="M3.5 1 H17.5 Q20 1 20 3.5 V13 Q20 15.5 17.5 15.5 H12.8 L10.5 19.8 L8.2 15.5 H3.5 Q1 15.5 1 13 V3.5 Q1 1 3.5 1 Z" fill="#808080"/><rect x="3" y="4" width="15" height="1.6" fill="#5a5a5a"/><rect x="3" y="7.1" width="15" height="1.6" fill="#5a5a5a"/><rect x="3" y="10.1" width="7.8" height="1.6" fill="#5a5a5a"/></svg>
<div class="r" style="left:900px;top:552px;width:370px;height:190px;background:#222222;border-radius:3px 3px 0 0;"></div>
<div class="r" style="left:900px;top:748px;width:370px;height:190.5px;background:#353535;border-radius:0 0 3px 3px;"></div>
<div class="t" style="left:903.60px;top:753.21px;font-size:10.5px;line-height:10.5px;font-weight:normal;color:#9a9a9a;font-family:"Liberation Mono", monospace;">1</div>
<div class="r" style="left:11.5px;top:953.0px;width:4px;height:4px;border-radius:2px;background:#3c3c3c;"></div>
<div class="r" style="left:11.5px;top:959.2px;width:4px;height:4px;border-radius:2px;background:#3c3c3c;"></div>
<div class="r" style="left:11.5px;top:965.4px;width:4px;height:4px;border-radius:2px;background:#3c3c3c;"></div>
<div class="r" style="left:18.5px;top:953px;width:31.5px;height:16px;border-radius:3px;background:#5e5e5e;box-shadow:0 0.6px 0 #383838;"></div>
<div class="t" style="left:20.50px;top:957.13px;font-size:10px;line-height:10px;font-weight:normal;color:#eaeaea;font-family:"Liberation Sans", sans-serif;"><svg width="5.56" height="7.16" viewBox="0 0 5.56 7.16" style="vertical-align:0;display:inline-block;overflow:visible"><path d="M2.90 0 H4.15 V7.16 H2.90 V2.60 Q1.70 3.50 0.50 3.70 V2.30 Q2.00 1.70 2.90 0 Z" fill="#eaeaea"/></svg></div>
<div class="r" style="left:53.5px;top:953px;width:31.5px;height:16px;border-radius:3px;background:#5e5e5e;box-shadow:0 0.6px 0 #383838;"></div>
<div class="t" style="left:55.50px;top:957.13px;font-size:10px;line-height:10px;font-weight:normal;color:#eaeaea;font-family:"Liberation Sans", sans-serif;"><svg width="5.56" height="7.16" viewBox="0 0 5.56 7.16" style="vertical-align:0;display:inline-block;overflow:visible"><path d="M2.90 0 H4.15 V7.16 H2.90 V2.60 Q1.70 3.50 0.50 3.70 V2.30 Q2.00 1.70 2.90 0 Z" fill="#eaeaea"/></svg></div>
<div class="r" style="left:1157.6px;top:953px;width:40.600000000000136px;height:16px;border-radius:3px;background:#5e5e5e;box-shadow:0 0.6px 0 #383838;"></div>
<div class="t" style="left:1159.60px;top:957.13px;font-size:10px;line-height:10px;font-weight:normal;color:#eaeaea;font-family:"Liberation Sans", sans-serif;"><svg width="5.56" height="7.16" viewBox="0 0 5.56 7.16" style="vertical-align:0;display:inline-block;overflow:visible"><path d="M2.90 0 H4.15 V7.16 H2.90 V2.60 Q1.70 3.50 0.50 3.70 V2.30 Q2.00 1.70 2.90 0 Z" fill="#eaeaea"/></svg></div>
<div class="r" style="left:1201.7px;top:953px;width:31.299999999999955px;height:16px;border-radius:3px;background:#5e5e5e;box-shadow:0 0.6px 0 #383838;"></div>
<div class="t" style="left:1203.70px;top:957.13px;font-size:10px;line-height:10px;font-weight:normal;color:#eaeaea;font-family:"Liberation Sans", sans-serif;"><svg width="5.56" height="7.16" viewBox="0 0 5.56 7.16" style="vertical-align:0;display:inline-block;overflow:visible"><path d="M2.90 0 H4.15 V7.16 H2.90 V2.60 Q1.70 3.50 0.50 3.70 V2.30 Q2.00 1.70 2.90 0 Z" fill="#eaeaea"/></svg>00</div>
<div class="r" style="left:1236.6px;top:953px;width:31.700000000000045px;height:16px;border-radius:3px;background:#5e5e5e;box-shadow:0 0.6px 0 #383838;"></div>
<div class="t" style="left:1238.60px;top:957.13px;font-size:10px;line-height:10px;font-weight:normal;color:#eaeaea;font-family:"Liberation Sans", sans-serif;"><svg width="5.56" height="7.16" viewBox="0 0 5.56 7.16" style="vertical-align:0;display:inline-block;overflow:visible"><path d="M2.90 0 H4.15 V7.16 H2.90 V2.60 Q1.70 3.50 0.50 3.70 V2.30 Q2.00 1.70 2.90 0 Z" fill="#eaeaea"/></svg>00</div>
<svg class="r" style="left:6px;top:948px;" width="1268" height="33" viewBox="0 0 1268 33"><rect x="90.50" y="16.50" width="2" height="5.50" fill="#232323"/><rect x="100.89" y="16.50" width="2" height="5.50" fill="#232323"/><rect x="111.29" y="16.50" width="2" height="5.50" fill="#232323"/><rect x="121.68" y="16.50" width="2" height="5.50" fill="#232323"/><rect x="132.08" y="11.50" width="2" height="10.50" fill="#232323"/><rect x="142.47" y="16.50" width="2" height="5.50" fill="#232323"/><rect x="152.86" y="16.50" width="2" height="5.50" fill="#232323"/><rect x="163.26" y="16.50" width="2" height="5.50" fill="#232323"/><rect x="173.65" y="16.50" width="2" height="5.50" fill="#232323"/><rect x="184.05" y="7.50" width="2" height="14.50" fill="#232323"/><rect x="194.44" y="16.50" width="2" height="5.50" fill="#232323"/><rect x="204.83" y="16.50" width="2" height="5.50" fill="#232323"/><rect x="215.23" y="16.50" width="2" height="5.50" fill="#232323"/><rect x="225.62" y="16.50" width="2" height="5.50" fill="#232323"/><rect x="236.02" y="11.50" width="2" height="10.50" fill="#232323"/><rect x="246.41" y="16.50" width="2" height="5.50" fill="#232323"/><rect x="256.80" y="16.50" width="2" height="5.50" fill="#232323"/><rect x="267.20" y="16.50" width="2" height="5.50" fill="#232323"/><rect x="277.59" y="16.50" width="2" height="5.50" fill="#232323"/><rect x="287.99" y="7.50" width="2" height="14.50" fill="#232323"/><rect x="298.38" y="16.50" width="2" height="5.50" fill="#232323"/><rect x="308.77" y="16.50" width="2" height="5.50" fill="#232323"/><rect x="319.17" y="16.50" width="2" height="5.50" fill="#232323"/><rect x="329.56" y="16.50" width="2" height="5.50" fill="#232323"/><rect x="339.96" y="11.50" width="2" height="10.50" fill="#232323"/><rect x="350.35" y="16.50" width="2" height="5.50" fill="#232323"/><rect x="360.74" y="16.50" width="2" height="5.50" fill="#232323"/><rect x="371.14" y="16.50" width="2" height="5.50" fill="#232323"/><rect x="381.53" y="16.50" width="2" height="5.50" fill="#232323"/><rect x="391.93" y="7.50" width="2" height="14.50" fill="#232323"/><rect x="402.32" y="16.50" width="2" height="5.50" fill="#232323"/><rect x="412.71" y="16.50" width="2" height="5.50" fill="#232323"/><rect x="423.11" y="16.50" width="2" height="5.50" fill="#232323"/><rect x="433.50" y="16.50" width="2" height="5.50" fill="#232323"/><rect x="443.90" y="11.50" width="2" height="10.50" fill="#232323"/><rect x="454.29" y="16.50" width="2" height="5.50" fill="#232323"/><rect x="464.68" y="16.50" width="2" height="5.50" fill="#232323"/><rect x="475.08" y="16.50" width="2" height="5.50" fill="#232323"/><rect x="485.47" y="16.50" width="2" height="5.50" fill="#232323"/><rect x="495.87" y="7.50" width="2" height="14.50" fill="#232323"/><rect x="506.26" y="16.50" width="2" height="5.50" fill="#232323"/><rect x="516.65" y="16.50" width="2" height="5.50" fill="#232323"/><rect x="527.05" y="16.50" width="2" height="5.50" fill="#232323"/><rect x="537.44" y="16.50" width="2" height="5.50" fill="#232323"/><rect x="547.84" y="11.50" width="2" height="10.50" fill="#232323"/><rect x="558.23" y="16.50" width="2" height="5.50" fill="#232323"/><rect x="568.62" y="16.50" width="2" height="5.50" fill="#232323"/><rect x="579.02" y="16.50" width="2" height="5.50" fill="#232323"/><rect x="589.41" y="16.50" width="2" height="5.50" fill="#232323"/><rect x="599.81" y="7.50" width="2" height="14.50" fill="#232323"/><rect x="610.20" y="16.50" width="2" height="5.50" fill="#232323"/><rect x="620.59" y="16.50" width="2" height="5.50" fill="#232323"/><rect x="630.99" y="16.50" width="2" height="5.50" fill="#232323"/><rect x="641.38" y="16.50" width="2" height="5.50" fill="#232323"/><rect x="651.78" y="11.50" width="2" height="10.50" fill="#232323"/><rect x="662.17" y="16.50" width="2" height="5.50" fill="#232323"/><rect x="672.56" y="16.50" width="2" height="5.50" fill="#232323"/><rect x="682.96" y="16.50" width="2" height="5.50" fill="#232323"/><rect x="693.35" y="16.50" width="2" height="5.50" fill="#232323"/><rect x="703.75" y="7.50" width="2" height="14.50" fill="#232323"/><rect x="714.14" y="16.50" width="2" height="5.50" fill="#232323"/><rect x="724.53" y="16.50" width="2" height="5.50" fill="#232323"/><rect x="734.93" y="16.50" width="2" height="5.50" fill="#232323"/><rect x="745.32" y="16.50" width="2" height="5.50" fill="#232323"/><rect x="755.72" y="11.50" width="2" height="10.50" fill="#232323"/><rect x="766.11" y="16.50" width="2" height="5.50" fill="#232323"/><rect x="776.50" y="16.50" width="2" height="5.50" fill="#232323"/><rect x="786.90" y="16.50" width="2" height="5.50" fill="#232323"/><rect x="797.29" y="16.50" width="2" height="5.50" fill="#232323"/><rect x="807.69" y="7.50" width="2" height="14.50" fill="#232323"/><rect x="818.08" y="16.50" width="2" height="5.50" fill="#232323"/><rect x="828.47" y="16.50" width="2" height="5.50" fill="#232323"/><rect x="838.87" y="16.50" width="2" height="5.50" fill="#232323"/><rect x="849.26" y="16.50" width="2" height="5.50" fill="#232323"/><rect x="859.66" y="11.50" width="2" height="10.50" fill="#232323"/><rect x="870.05" y="16.50" width="2" height="5.50" fill="#232323"/><rect x="880.44" y="16.50" width="2" height="5.50" fill="#232323"/><rect x="890.84" y="16.50" width="2" height="5.50" fill="#232323"/><rect x="901.23" y="16.50" width="2" height="5.50" fill="#232323"/><rect x="911.63" y="7.50" width="2" height="14.50" fill="#232323"/><rect x="922.02" y="16.50" width="2" height="5.50" fill="#232323"/><rect x="932.41" y="16.50" width="2" height="5.50" fill="#232323"/><rect x="942.81" y="16.50" width="2" height="5.50" fill="#232323"/><rect x="953.20" y="16.50" width="2" height="5.50" fill="#232323"/><rect x="963.60" y="11.50" width="2" height="10.50" fill="#232323"/><rect x="973.99" y="16.50" width="2" height="5.50" fill="#232323"/><rect x="984.38" y="16.50" width="2" height="5.50" fill="#232323"/><rect x="994.78" y="16.50" width="2" height="5.50" fill="#232323"/><rect x="1005.17" y="16.50" width="2" height="5.50" fill="#232323"/><rect x="1015.57" y="7.50" width="2" height="14.50" fill="#232323"/><rect x="1025.96" y="16.50" width="2" height="5.50" fill="#232323"/><rect x="1036.35" y="16.50" width="2" height="5.50" fill="#232323"/><rect x="1046.75" y="16.50" width="2" height="5.50" fill="#232323"/><rect x="1057.14" y="16.50" width="2" height="5.50" fill="#232323"/><rect x="1067.54" y="11.50" width="2" height="10.50" fill="#232323"/><rect x="1077.93" y="16.50" width="2" height="5.50" fill="#232323"/><rect x="1088.32" y="16.50" width="2" height="5.50" fill="#232323"/><rect x="1098.72" y="16.50" width="2" height="5.50" fill="#232323"/><rect x="1109.11" y="16.50" width="2" height="5.50" fill="#232323"/></svg>
<div class="r" style="left:88px;top:952px;width:2px;height:18px;background:#f0d21e;"></div>
<div class="t" style="left:93.50px;top:958.38px;font-size:9px;line-height:9px;font-weight:bold;color:#d8c020;font-family:"Liberation Sans", sans-serif;"><svg width="5.00" height="6.44" viewBox="0 0 5.00 6.44" style="vertical-align:0;display:inline-block;overflow:visible"><path d="M2.61 0 H3.73 V6.44 H2.61 V2.34 Q1.53 3.15 0.45 3.33 V2.07 Q1.80 1.53 2.61 0 Z" fill="#d8c020"/></svg></div>
<svg class="r" style="left:1118px;top:953px;" width="38" height="18" viewBox="0 0 38 18"><rect x="1.5" y="1" width="1.8" height="15" fill="#9a9a9a"/><path d="M8 3.8 V13 L3.5 8.4 Z" fill="#9a9a9a"/><path d="M13.2 3.5 L22.8 8.4 L13.2 13.3 L16 8.4 Z" fill="#9a9a9a"/><rect x="33.5" y="1" width="1.8" height="15" fill="#9a9a9a"/><path d="M29 3.8 V13 L33.5 8.4 Z" fill="#9a9a9a"/></svg>
</body></html>
